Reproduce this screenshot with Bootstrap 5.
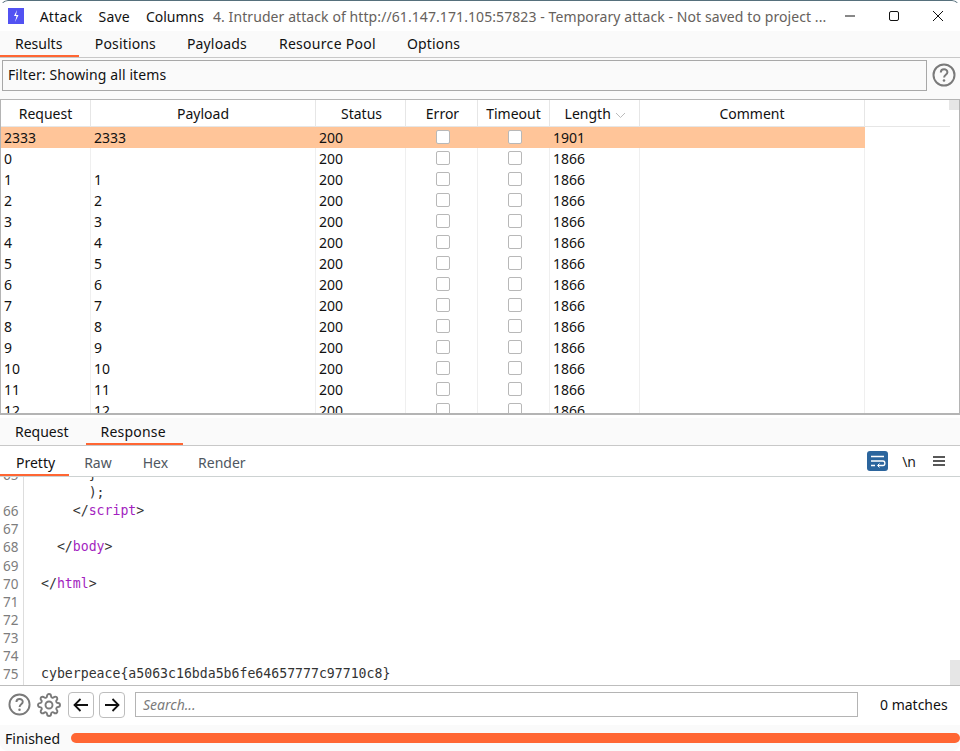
<!DOCTYPE html>
<html lang="en"><head><meta charset="utf-8"><title>Intruder attack</title>
<link rel="stylesheet" href="https://cdn.jsdelivr.net/npm/bootstrap@5.3.0/dist/css/bootstrap.min.css">
<style>
html,body{height:751px;overflow:hidden;margin:0}
body{font-family:"Noto Sans",sans-serif;font-size:14px;color:#111;background:#fff}
.win{width:960px;height:751px;display:flex;flex-direction:column;overflow:hidden;position:relative;border-radius:8px}
.win::after{content:"";position:absolute;inset:0;border:1px solid transparent;border-top-color:#56707c;border-radius:8px;pointer-events:none}
.titlebar{height:31px;flex:none;background:#fff;padding-top:1px}
.appicon{width:16px;height:16px;background:#5252f2;margin-left:8px}
.menuitem{margin-left:16px}
.menuitem.wide{letter-spacing:.3px}
.menuitem.savem{letter-spacing:.2px}
.titletext{color:#66615c;margin-left:9px;white-space:nowrap;width:630px;letter-spacing:.085px}
.winbtn{width:44px;height:28px}
.tabstrip{background:#fafafa;display:flex;flex:none}
.tabstrip span{display:block;border-bottom:2px solid transparent}
.tabstrip span.on{border-bottom-color:#ff6633}
.toptabs{height:27px;border-bottom:1px solid #c8c8c8;letter-spacing:.15px}
.toptabs span{height:26px;line-height:25px;padding:0 15.5px}
.toptabs span.on{padding:0 17px 0 15px;letter-spacing:0}
.toptabs span.widetab{letter-spacing:.3px;padding-left:16.5px}
.filterrow{height:41px;background:#fafafa;flex:none;padding:2px 0 0 2px}
.filterbox{width:925px;height:31px;border:1px solid #a8a8a8;padding-left:5px;line-height:28px;background:#fafafa;letter-spacing:.1px}
.helpbig{margin:3px 0 0 5px}
.tablewrap{height:316px;flex:none;border:1px solid #b4b4b4;border-bottom-width:2px;background:#fff;position:relative;overflow:hidden}
.grid{width:949px;display:grid;grid-template-columns:90px 225px 90px 72px 72px 90px 225px 85px;grid-template-rows:27px;grid-auto-rows:21px;line-height:21px}
.hcell{height:27px;border-right:1px solid #e6e6e6;border-bottom:1px solid #e6e6e6;text-align:center;line-height:27px}
.hcell.end{border-right:0}
.hcell.nudge{padding-left:2px}
.hcell.lengthcol{padding-left:2px}
.hcell.lengthcol svg{margin-left:1px}
.gcell{padding-left:3px;border-right:1px solid #efefef;white-space:nowrap}
.gcell.hi,.gcell.hi.box{background:#ffc599;border-right-color:#ffc599}
.gcell.tail{border-right:0;background:#fff!important}
.gcell.box{display:flex;align-items:center;justify-content:center;padding:0 0 1px 3px}
.gcell.box i{display:block;width:14px;height:14px;border:1px solid #b8b8b8;border-radius:2px;background:#fff}
.sthumb{position:absolute;right:0;top:0;width:10px;height:10px;background:#e6e6e6}
.spacer{height:3px;flex:none;background:#fff}
.restabs{height:28px;background:#fafafa;border-bottom:1px solid #c8c8c8}
.restabs span{height:27px;line-height:27px}
.restabs .rq{padding:0 17px 0 15px}
.restabs .rs{padding:0 17px 0 15px;letter-spacing:.2px}
.viewbar{height:31px;flex:none;background:#fff;border-bottom:1px solid #cdd2d2;display:flex}
.viewbar .vt{height:30px;line-height:33px;padding:0 15px;display:block;color:#4f5761}
.viewbar .vt.on{border-bottom:2px solid #ff6633;color:#111;padding:0 14px 0 16px}
.viewbar .vt.rawtab{padding-right:16px}
.barright{height:30px}
.wrapbtn{width:21px;height:20px;background:#2b659d;border-radius:3px;margin-right:14px}
.nl{margin-right:17px;color:#222}
.menuicon{margin-right:15px}
.code{height:209px;flex:none;position:relative;overflow:hidden;display:flex;background:#fff;border-bottom:1px solid #bdbdbd}
.gutter{width:24px;border-right:1px solid #ddd;flex:none;color:#7d7d7d;padding-left:3px}
.lines{font-family:"DejaVu Sans Mono",monospace;font-size:13.2px;color:#333;padding-left:17px;flex:1}
.ln{height:18.11px;line-height:18.11px;white-space:pre}
.gutter .ln{font-family:"Noto Sans",sans-serif;font-size:13.5px}
.tag{color:#a31fc0}
.codewrap{margin-top:-11px}
.cthumb{position:absolute;right:0;bottom:0;width:10px;height:25px;background:#e6e6e6}
.searchbar{height:39px;flex:none;background:#fff;padding:0 0 2px 8px}
.navbtn{width:26px;height:26px;border:1px solid #bdbdbd;border-radius:4px;background:#fff;padding:0;display:flex;align-items:center;justify-content:center}
.gearicon{margin:0 7px 0 6px}
.nextbtn{margin-left:5px}
.searchin{width:723px;height:25px;border:1px solid #b4b4b4;margin-left:10px;padding-left:7px;line-height:23px;font-style:italic;color:#7b7b7b}
.matches{margin-left:22px}
.statusbar{flex:none;height:26px;background:#fafafa;padding:1px 0 0 5px}
.prog{flex:1;height:10px;background:#ff6633;border-radius:5px;margin:0 0 2px 11px}
</style></head>
<body>
<div class="win">
 <div class="titlebar d-flex align-items-center">
  <div class="appicon d-flex align-items-center justify-content-center"><svg width="10" height="14" viewBox="0 0 10 14"><path d="M6 1 3 7h2.500L4 13l3.500-7H5z" fill="#fff"/></svg></div>
  <span class="menuitem wide">Attack</span><span class="menuitem savem">Save</span><span class="menuitem">Columns</span>
  <span class="titletext">4. Intruder attack of http://61.147.171.105:57823 - Temporary attack - Not saved to project ...</span>
  <div class="ms-auto d-flex">
   <div class="winbtn d-flex align-items-center justify-content-center"><svg width="12" height="12" viewBox="0 0 12 12"><path d="M1 6h10" stroke="#111" stroke-width="1"/></svg></div>
   <div class="winbtn d-flex align-items-center justify-content-center"><svg width="12" height="12" viewBox="0 0 12 12"><rect x="1.500" y="1.500" width="9" height="9" rx="1.500" fill="none" stroke="#111"/></svg></div>
   <div class="winbtn d-flex align-items-center justify-content-center"><svg width="12" height="12" viewBox="0 0 12 12"><path d="M1 1l10 10M11 1 1 11" stroke="#111" stroke-width="1"/></svg></div>
  </div>
 </div>
 <div class="tabstrip toptabs"><span class="on">Results</span><span>Positions</span><span>Payloads</span><span class="widetab">Resource Pool</span><span>Options</span></div>
 <div class="filterrow d-flex align-items-start">
  <div class="filterbox">Filter: Showing all items</div>
  <svg class="helpbig" width="24" height="24" viewBox="0 0 24 24"><circle cx="12" cy="12" r="10.500" fill="none" stroke="#7a7a7a" stroke-width="2"/><path d="M8.800 9.500c0-4.300 6.600-4.300 6.600-.3 0 2.600-3.300 2.500-3.300 5.300" fill="none" stroke="#7a7a7a" stroke-width="2"/><circle cx="12" cy="17.500" r="1.300" fill="#7a7a7a"/></svg>
 </div>
 <div class="tablewrap"><div class="grid" id="grid"></div><div class="sthumb"></div></div>
 <div class="spacer"></div>
 <div class="tabstrip restabs"><span class="rq">Request</span><span class="rs on">Response</span></div>
 <div class="viewbar align-items-start">
  <span class="vt on">Pretty</span><span class="vt rawtab">Raw</span><span class="vt">Hex</span><span class="vt">Render</span>
  <div class="ms-auto d-flex align-items-center barright">
   <div class="wrapbtn d-flex align-items-center justify-content-center"><svg width="17" height="14" viewBox="0 0 17 14"><path d="M2 2.500h13M2 7h12c2.500 0 2.500 4.500 0 4.500H9M2 11.500h4" fill="none" stroke="#fff" stroke-width="1.300"/><path d="M10.500 9.500 8.500 11.500l2 2" fill="none" stroke="#fff"/></svg></div>
   <span class="nl">\n</span>
   <svg class="menuicon" width="12" height="12" viewBox="0 0 12 12"><path d="M0 2h12M0 6h12M0 10h12" stroke="#222" stroke-width="1.500"/></svg>
  </div>
 </div>
 <div class="code">
  <div class="gutter"><div class="codewrap" id="gut"></div></div>
  <div class="lines"><div class="codewrap" id="cod"></div></div>
  <div class="cthumb"></div>
 </div>
 <div class="searchbar d-flex align-items-center">
  <svg width="23" height="23" viewBox="0 0 24 24"><circle cx="12" cy="12" r="10.500" fill="none" stroke="#7a7a7a" stroke-width="2"/><path d="M8.800 9.500c0-4.300 6.600-4.300 6.600-.3 0 2.600-3.300 2.500-3.300 5.300" fill="none" stroke="#7a7a7a" stroke-width="2"/><circle cx="12" cy="17.500" r="1.300" fill="#7a7a7a"/></svg>
  <svg class="gearicon" width="24" height="24" viewBox="0 0 24 24" fill="none" stroke="#7a7a7a" stroke-width="1.900"><circle cx="12" cy="12" r="3.500"/><path d="M19.400 15a1.650 1.650 0 0 0 .33 1.820l.06.06a2 2 0 0 1 0 2.830 2 2 0 0 1-2.830 0l-.06-.06a1.650 1.650 0 0 0-1.820-.33 1.650 1.650 0 0 0-1 1.510V21a2 2 0 0 1-2 2 2 2 0 0 1-2-2v-.09A1.650 1.650 0 0 0 9 19.400a1.650 1.650 0 0 0-1.820.33l-.06.06a2 2 0 0 1-2.830 0 2 2 0 0 1 0-2.830l.06-.06a1.650 1.650 0 0 0 .33-1.820 1.650 1.650 0 0 0-1.510-1H3a2 2 0 0 1-2-2 2 2 0 0 1 2-2h.09A1.650 1.650 0 0 0 4.600 9a1.650 1.650 0 0 0-.33-1.820l-.06-.06a2 2 0 0 1 0-2.830 2 2 0 0 1 2.830 0l.06.06a1.650 1.650 0 0 0 1.820.33H9a1.650 1.650 0 0 0 1-1.510V3a2 2 0 0 1 2-2 2 2 0 0 1 2 2v.09a1.650 1.650 0 0 0 1 1.510 1.650 1.650 0 0 0 1.820-.33l.06-.06a2 2 0 0 1 2.830 0 2 2 0 0 1 0 2.830l-.06.06a1.650 1.650 0 0 0-.33 1.820V9a1.650 1.650 0 0 0 1.510 1H21a2 2 0 0 1 2 2 2 2 0 0 1-2 2h-.09a1.650 1.650 0 0 0-1.510 1z"/></svg>
  <button class="navbtn" type="button" aria-label="Back"><svg width="16" height="14" viewBox="0 0 16 14"><path d="M15 7H2M7.500 1 1.500 7l6 6" fill="none" stroke="#111" stroke-width="1.800"/></svg></button>
  <button class="navbtn nextbtn" type="button" aria-label="Forward"><svg width="16" height="14" viewBox="0 0 16 14"><path d="M1 7h13M8.500 1l6 6-6 6" fill="none" stroke="#111" stroke-width="1.800"/></svg></button>
  <div class="searchin">Search...</div>
  <span class="matches">0 matches</span>
 </div>
 <div class="statusbar d-flex align-items-center"><span>Finished</span><div class="prog"></div></div>
</div>
<script>
const grid=document.getElementById('grid');
const heads=[['Request',''],['Payload',''],['Status',' nudge'],['Error',' nudge'],['Timeout',''],['Length <svg width="11" height="7" viewBox="0 0 11 7"><path d="M1 1l4.500 4.500L10 1" fill="none" stroke="#bbb"/></svg>',' lengthcol'],['Comment',''],['',' end']];
let h='';heads.forEach(t=>h+='<div class="hcell'+t[1]+'">'+t[0]+'</div>');
const rows=[['2333','2333','1901'],['0','','1866']];
for(let i=1;i<=12;i++)rows.push([''+i,''+i,'1866']);
rows.forEach((r,i)=>{const c=i==0?' hi':'';
h+='<div class="gcell'+c+'">'+r[0]+'</div><div class="gcell'+c+'">'+r[1]+'</div><div class="gcell'+c+'">200</div><div class="gcell box'+c+'"><i></i></div><div class="gcell box'+c+'"><i></i></div><div class="gcell'+c+'">'+r[2]+'</div><div class="gcell'+c+'"></div><div class="gcell tail"></div>';});
grid.innerHTML=h;
const L=[['65','      }'],['','      );'],['66','    &lt;/<span class="tag">script</span>&gt;'],['67',''],['68','  &lt;/<span class="tag">body</span>&gt;'],['69',''],['70','&lt;/<span class="tag">html</span>&gt;'],['71',''],['72',''],['73',''],['74',''],['75','cyberpeace{a5063c16bda5b6fe64657777c97710c8}']];
document.getElementById('gut').innerHTML=L.map(l=>'<div class="ln">'+(l[0]||'&nbsp;')+'</div>').join('');
document.getElementById('cod').innerHTML=L.map(l=>'<div class="ln">'+(l[1]||' ')+'</div>').join('');
</script>
<script src="https://cdn.jsdelivr.net/npm/bootstrap@5.3.0/dist/js/bootstrap.bundle.min.js"></script>
</body></html>
